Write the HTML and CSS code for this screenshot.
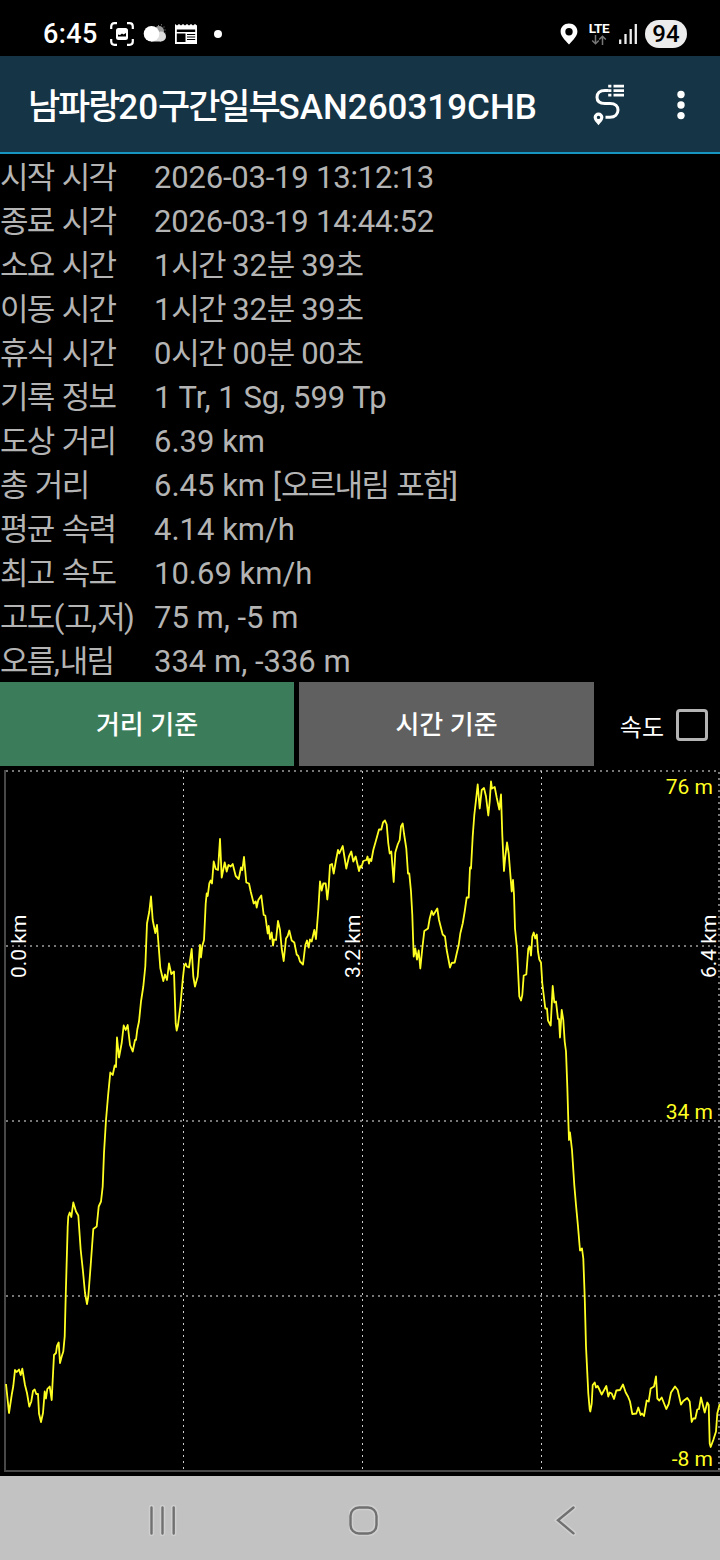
FILE: index.html
```
<!DOCTYPE html>
<html lang="ko">
<head>
    <meta charset="UTF-8">
    <meta name="viewport" content="width=device-width, initial-scale=1.0">
    <title>남파랑20구간일부SAN260319CHB</title>
    <link rel="stylesheet" href="styles.css">
</head>
<body>
    <div class="status-bar">
        <span class="clock">6:45</span>
        <svg class="icon-capture" width="24" height="24" viewBox="0 0 24 24">
            <path d="M1.2 7V4.5Q1.2 1.2 4.5 1.2H7M17 1.2h2.5q3.3 0 3.3 3.3V7M22.8 17v2.5q0 3.3-3.3 3.3H17M7 22.8H4.5q-3.3 0-3.3-3.3V17" fill="none" stroke="#fff" stroke-width="2.2"/>
            <rect x="6" y="6" width="12" height="12" rx="2.5" fill="#fff"/>
            <path d="M8 14.5v-2l2 .5 2-1.500 1.500 1 2.500-1.500v3.500z" fill="#000"/>
        </svg>
        <svg class="icon-weather" width="24" height="20" viewBox="0 0 24 20">
            <circle cx="16" cy="7" r="5" fill="#999"/>
            <path d="M15 1.500h1M18 .8h1M20.500 3h1M21.500 6h1M21.500 9h1" stroke="#888" stroke-width="1"/>
            <circle cx="18" cy="12.500" r="5" fill="#ddd"/>
            <rect x="8" y="12" width="10" height="5.500" fill="#ddd"/>
            <circle cx="8.500" cy="9.800" r="7.800" fill="#fff"/>
        </svg>
        <svg class="icon-news" width="22" height="20" viewBox="0 0 22 20">
            <path d="M0 0l2 1.500L4 0l2 1.500L8 0l2 1.500L12 0l2 1.500L16 0l2 1.500L20 0l2 1.500V20H0z" fill="#fff"/>
            <path d="M1.800 5.500h18.400v2.600H1.800zM1.800 9.600h8.700v8.300H1.800z" fill="#000"/>
            <path d="M12 10.500h8.200M12 13h8.200M12 15.500h8.200" stroke="#000"/>
        </svg>
        <span class="more-dot"></span>
        <span class="spacer"></span>
        <svg class="icon-pin" width="18" height="22" viewBox="0 0 18 22">
            <path fill-rule="evenodd" d="M9 .5C4.200.5.600 4 .600 8.500.600 13 4.500 16.500 9 21.500c4.500-5 8.400-8.500 8.400-13C17.400 4 13.800.5 9 .5zM9 5a3.700 3.700 0 1 1 0 7.400A3.700 3.700 0 0 1 9 5z" fill="#fff"/>
        </svg>
        <div class="network">
            <span>LTE</span>
            <svg width="16" height="10" viewBox="0 0 16 10">
                <path d="M4.500 0v8.500M1.200 5.500l3.300 3.300 3.300-3.300" fill="none" stroke="#777" stroke-width="1.500"/>
                <path d="M11.500 10V1.200M8.200 4.500l3.300-3.300 3.300 3.300" fill="none" stroke="#777" stroke-width="1.500"/>
            </svg>
        </div>
        <svg class="icon-signal" width="20" height="20" viewBox="0 0 20 20">
            <path d="M2.200 15.500v4.500M7.500 10v10M12.700 5v15M17.800 0v20" stroke="#eee" stroke-width="2.300"/>
        </svg>
        <span class="battery">94</span>
    </div>

    <header class="app-bar">
        <h1><span class="ko">남파랑</span>20<span class="ko">구간일부</span>SAN260319CHB</h1>
        <svg class="icon-track" width="32" height="42" viewBox="0 0 32 42">
            <path d="M15.500 6.500H12C6.500 6.500 4 9.500 4 13.200c0 3.500 2.500 6.200 8 6.200h5c5.500 0 8 3 8 6.600 0 4-3 7.200-8 7.200h-4.500" fill="none" stroke="#fff" stroke-width="3"/>
            <path d="M15.200 2.200h3.200M15.200 6.700h3.200M15.200 11.200h3.200M20.500 2.200h10.500M20.500 6.700h10.500M20.500 11.200h10.500" stroke="#fff" stroke-width="2.800"/>
            <path fill-rule="evenodd" d="M5.500 28.500a4.900 4.900 0 0 0-4.900 4.800c0 3 2.400 4.900 4.900 8 2.500-3.100 4.900-5 4.900-8a4.900 4.900 0 0 0-4.900-4.800zm0 3.200a1.700 1.700 0 1 1 0 3.400 1.700 1.700 0 0 1 0-3.400z" fill="#fff"/>
        </svg>
        <svg class="icon-more" width="8" height="30" viewBox="0 0 8 30">
            <circle cx="4" cy="4.500" r="3.700" fill="#fff"/>
            <circle cx="4" cy="15" r="3.700" fill="#fff"/>
            <circle cx="4" cy="25.600" r="3.700" fill="#fff"/>
        </svg>
    </header>

    <dl class="info">
        <dt>시작 시각</dt><dd class="time">2026-03-19 13:12:13</dd>
        <dt>종료 시각</dt><dd class="time">2026-03-19 14:44:52</dd>
        <dt>소요 시간</dt><dd class="time">1<span class="ko">시간</span> 32<span class="ko">분</span> 39<span class="ko">초</span></dd>
        <dt>이동 시간</dt><dd class="time">1<span class="ko">시간</span> 32<span class="ko">분</span> 39<span class="ko">초</span></dd>
        <dt>휴식 시간</dt><dd class="time">0<span class="ko">시간</span> 00<span class="ko">분</span> 00<span class="ko">초</span></dd>
        <dt>기록 정보</dt><dd>1 Tr, 1 Sg, 599 Tp</dd>
        <dt>도상 거리</dt><dd>6.39 km</dd>
        <dt>총 거리</dt><dd>6.45 km [<span class="ko">오르내림 포함</span>]</dd>
        <dt>평균 속력</dt><dd>4.14 km/h</dd>
        <dt>최고 속도</dt><dd>10.69 km/h</dd>
        <dt>고도<span class="punct">(</span>고<span class="punct">,</span>저<span class="punct">)</span></dt><dd>75 m, -5 m</dd>
        <dt>오름<span class="punct">,</span>내림</dt><dd>334 m, -336 m</dd>
    </dl>

    <div class="controls">
        <button class="tab active">거리 기준</button>
        <button class="tab">시간 기준</button>
        <label class="speed">속도<span class="checkbox"></span></label>
    </div>

    <svg class="chart" width="720" height="710" viewBox="0 766 720 710">
        <!-- grid -->
        <g class="grid">
            <path d="M6 771H720M6 946H720M6 1121H720M6 1296H720M719 772V1470"/>
            <path class="thin" d="M183.500 771V1470M362.500 771V1470M541.500 771V1470"/>
        </g>
        <path class="axis" d="M5 770V1471H720"/>

        <!-- elevation -->
        <polyline class="elevation" points="
            6,1384 9,1413 11.7,1395 13.3,1386 15,1370 16.7,1372 19,1369.5 20.7,1375 22.3,1368.7 25,1385
            27,1393 29.3,1406.7 31.3,1401.5 33,1391 34.7,1389.5 36.3,1394 38,1394 39,1413.5 41,1422 43,1413
            44.7,1391.5 46,1398.5 47.3,1389 49.7,1386.5 51.7,1400 52.7,1380 54,1355 56,1353 57,1346 58.7,1342.5
            60,1363 61.7,1356.5 63.3,1351.5 64.7,1336.5 65.7,1296.5 67.7,1226.5 68.3,1216.5 69.7,1212.5 71.3,1217
            73.3,1202.5 76,1211.5 78.3,1215.5 80.7,1250 83,1271.5 85,1293 87,1304 88.3,1296.5 90.7,1265 93.3,1229
            96.7,1226.5 98.7,1206.5 101,1201.5 102.7,1186.5 104,1153 106,1120 108,1096.5 110.3,1072.5 112.7,1075
            114.7,1065.5 116,1067 117,1037.5 119,1057.5 121.7,1043 123.7,1025.5 125.7,1030 127.7,1025 130,1045
            132.7,1051.5 135,1040 136,1040 137.3,1029.5 139,1021.5 141,1001.5 143.3,986.5 145.3,966.5 147,923.5
            149.3,911.5 151,896.5 152.7,920 155.3,933 157,925 158.7,946.5 160.3,968 163.3,981 165,974.5 167,980
            169,963.5 171.3,974 174,971.5 175.7,1023.5 176.7,1030.5 178,1025 180.3,1006.5 182.7,980 184.3,965.5
            185.7,963.5 186.7,966.5 189,967.5 191.7,949 193.3,976.5 195,986.5 197.7,976.5 200,945 201,957.5
            202.3,946 204,940 205.7,903.5 206.7,893.5 207.7,896 209.3,883.5 210.7,880.5 212,883.5 213.7,861.5
            215.7,869 218,870 220,839 221.7,877.5 224.7,862.5 226.7,871.5 228.5,865 230.7,866.5 232.7,864
            235.7,876 238.7,879 241,867.5 242.3,870 244,857 246.3,882.5 249,883.5 250.7,891.5 253.7,903.5
            255.7,901.5 256.7,907.5 258.3,900 261.3,895.5 263.7,915 265.3,915.5 267.7,933.5 268.7,926 270,939
            271.7,932.5 273,945.5 274,939.5 276,940 278,921 280,930 281.7,948.5 283.7,961 286,938.5 287.7,936
            289.3,930.5 291.7,940.5 294.3,942.5 296.7,954.5 298.3,956 300,961.5 303,964.5 305.3,945 307,940.5
            308.7,947.5 310,939.5 311.7,941.5 314.3,930 316,939 318.3,910 320,881.5 321.7,890.5 323.3,883.5
            325.7,883.5 327.3,899.5 328.7,886.5 330,865 332,864 333.7,873.5 336,860 338,850 339.3,853.5 342.7,846
            344.7,858.5 346.3,868.5 349,856.5 351.3,851.5 353.3,861.5 355.7,856.5 359,871 360.3,866 361.3,867.5
            363.3,861 366.5,860 367.5,856.5 369,863.5 370,859 371.3,861 373.3,850 375.7,841.5 379,829.5 381.3,829.5
            383,822.5 385,820.5 386.7,824.5 388.3,843.5 389.7,853.5 391.3,851.5 393.7,882 395.3,852.5 397.7,844.5
            399.7,840 401,826.5 402.7,823.5 404,833.5 406.3,848.5 408,873.5 409.3,873.5 411,891.5 412.3,915
            413.7,956.5 415.3,948.5 417,959.5 418.7,950.5 420.3,968.5 422.3,948.5 424.3,931 428,928.5 429.7,918.5
            431.7,911 433.3,915 437.3,908.5 439,920 442.7,934.5 445,936.5 446.7,950 450,967.5 451.7,963 454.7,962.5
            456.7,953.5 458.7,945 460.3,933.5 462.7,923.5 464.7,911.5 466.7,897.5 468.7,897.5 470,867.5 471,868.5
            472.7,836.5 474.3,815 476,800 477.7,784.5 479.7,808.5 481.7,790 484,788 486,796.5 488.3,815.5
            489.7,801.5 491,781.5 492,788.5 494.7,787 496.7,797.5 499.3,809.5 501,794.5 502.3,835 504,871
            505.3,856.5 507,842.5 508.7,853.5 511.7,891.5 513,880 514,895 515,928.5 517,948.5 519.3,996.5 521,1000.5
            522.3,995 523.7,975.5 526.3,974.5 528.3,948.5 529.7,946.5 531,955.5 532.3,936.5 533.7,932.5 535.3,938.5
            536.8,934.5 538,951.5 539.3,959.5 541,962.5 542.3,983.5 543.7,995 545.3,1008.5 547,1008.5 548,1020.5
            550.7,1025.5 552.7,986 554.3,1002.5 556,1001.5 558,1019 559,1019 560,1037.5 561.7,1010 563.3,1020
            564.7,1041.5 566,1051.5 567.3,1086.5 568.3,1120 569,1140 570,1132.5 572,1150 574.3,1185 576,1205
            578,1226.5 580,1250.5 582,1248.5 583.3,1258.5 584.7,1296.5 586,1346.5 588.3,1393.5 589.7,1409.5
            590.3,1411.5 591.7,1403.5 592.7,1385 594.7,1382.5 596,1387.5 597.7,1386 601.7,1394.5 606.3,1386
            608.3,1396.5 609.7,1392.5 611.7,1393.5 614,1399 616.3,1390.5 620,1390 623,1384.5 625.7,1392.5
            628,1396.5 630,1401.5 632.3,1414 636.3,1413.5 638.3,1407.5 640.7,1415 642,1413.5 644,1416 646.7,1400.5
            648.7,1401.5 650.7,1388.5 654,1386.5 656,1376.5 657.3,1398.5 659.3,1400.5 661.7,1397.5 666.3,1409
            668.7,1404 671,1392.5 675,1386.5 677.7,1390 681,1404.5 683.3,1401 687.3,1398 689.7,1401.5 691.7,1422
            693.3,1418.5 695.3,1418.5 697.3,1409.5 699,1409 701,1397.5 704.7,1412.5 707.3,1402.5 708.7,1405
            709.7,1443.5 710.7,1447 713.3,1440 716,1431.5 717.3,1413.5 719.7,1404"/>

        <g class="altitude-labels">
            <text x="713" y="794">76 m</text>
            <text x="713" y="1119">34 m</text>
            <text x="713" y="1466">-8 m</text>
        </g>
        <g class="distance-labels">
            <text transform="translate(26 978) rotate(-90)">0.0 km</text>
            <text transform="translate(360 978) rotate(-90)">3.2 km</text>
            <text transform="translate(716 978) rotate(-90)">6.4 km</text>
        </g>
    </svg>

    <nav class="nav-bar">
        <svg width="32" height="32" viewBox="0 0 32 32">
            <path class="halo" d="M4.500 3.500v26M15.500 3.500v26M26.700 3.500v26"/>
            <path d="M4.500 3.500v26M15.500 3.500v26M26.700 3.500v26"/>
        </svg>
        <svg width="32" height="32" viewBox="0 0 32 32">
            <rect class="halo" x="1.500" y="3.500" width="26" height="26" rx="8.500"/>
            <rect x="1.500" y="3.500" width="26" height="26" rx="8.500"/>
        </svg>
        <svg width="32" height="32" viewBox="0 0 32 32">
            <path class="halo" d="M23.500 3.500L8 16.300l15.500 13"/>
            <path d="M23.500 3.500L8 16.300l15.500 13"/>
        </svg>
    </nav>
</body>
</html>
```
FILE: styles.css
```
* {
    margin: 0;
    padding: 0;
    box-sizing: border-box;
}

body {
    width: 720px;
    height: 1560px;
    overflow: hidden;
    background: #000;
    color: #fff;
    font-family: Roboto, 'Noto Sans CJK KR', sans-serif;
}

svg {
    display: block;
    flex: none;
}

/* Status bar */
.status-bar {
    display: flex;
    align-items: center;
    height: 56px;
    padding: 12px 33px 0 43px;
}

.clock {
    width: 67px;
    font-size: 27px;
    font-weight: 500;
    letter-spacing: 0.4px;
    line-height: 44px;
}

.icon-weather {
    margin-left: 9px;
}

.icon-news {
    margin-left: 8px;
}

.more-dot {
    width: 8px;
    height: 8px;
    margin-left: 17px;
    border-radius: 50%;
    background: #fff;
}

.spacer {
    flex: 1;
}

.network {
    display: flex;
    flex-direction: column;
    align-items: center;
    width: 22px;
    margin: 0 8px 2px 10px;
    font-size: 13.5px;
    font-weight: 700;
    letter-spacing: -0.4px;
    line-height: 13px;
}

.battery {
    width: 42px;
    height: 28px;
    margin-left: 7px;
    border-radius: 14px;
    background: #ececec;
    color: #000;
    font-size: 24px;
    font-weight: 500;
    line-height: 29px;
    text-align: center;
}

/* App bar */
.app-bar {
    display: flex;
    align-items: center;
    height: 98px;
    padding: 2px 35px 0 28px;
    background: #153445;
    border-bottom: 2px solid #1595bf;
}

.app-bar h1 {
    flex: 1;
    padding-top: 5px;
    font-size: 35px;
    font-weight: 500;
    line-height: 48px;
    white-space: nowrap;
}

.app-bar .ko {
    letter-spacing: -2.1px;
}

.icon-more {
    margin-left: 52px;
}

/* Track info */
.info {
    display: grid;
    grid-template-columns: 154px 1fr;
    grid-auto-rows: 44px;
    color: #b4b4b4;
    font-size: 31px;
    line-height: 48px;
    white-space: nowrap;
}

.info dt,
.info .ko {
    letter-spacing: -1.7px;
    word-spacing: 2px;
}

.info .punct {
    letter-spacing: 0;
}

.info .time {
    letter-spacing: -0.2px;
}

/* Chart mode */
.controls {
    display: flex;
    height: 84px;
}

.tab {
    width: 295px;
    padding-top: 2px;
    border: none;
    background: #606060;
    color: #fff;
    font: 500 26px/82px Roboto, 'Noto Sans CJK KR', sans-serif;
}

.tab.active {
    width: 294px;
    margin-right: 5px;
    background: #3b7c5a;
}

.speed {
    display: flex;
    flex: 1;
    align-items: center;
    justify-content: flex-end;
    padding: 2px 12px 0 0;
    font-size: 24px;
}

.checkbox {
    width: 32px;
    height: 32px;
    margin-left: 12px;
    border: 3px solid #b4b4b4;
    border-radius: 4px;
}

/* Elevation chart */
.grid path {
    fill: none;
    stroke: #777;
    stroke-width: 2;
    stroke-dasharray: 2 4;
}

.grid .thin {
    stroke: #ccc;
    stroke-width: 1;
}

.axis {
    fill: none;
    stroke: #484848;
    stroke-width: 2;
}

.elevation {
    fill: none;
    stroke: #ff2;
    stroke-width: 1.8;
    stroke-linejoin: round;
}

.altitude-labels {
    fill: #ff2;
    font-size: 21px;
    text-anchor: end;
}

.distance-labels {
    fill: #fff;
    font-size: 21px;
}

/* Navigation bar */
.nav-bar {
    display: flex;
    justify-content: space-between;
    height: 84px;
    padding: 28px 138px 0 147px;
    background: #c2c2c2;
}

.nav-bar path,
.nav-bar rect {
    fill: none;
    stroke: #707070;
    stroke-width: 2.4;
    stroke-linecap: round;
}

.nav-bar .halo {
    stroke: #cfcfcf;
    stroke-width: 5.5;
}
```
